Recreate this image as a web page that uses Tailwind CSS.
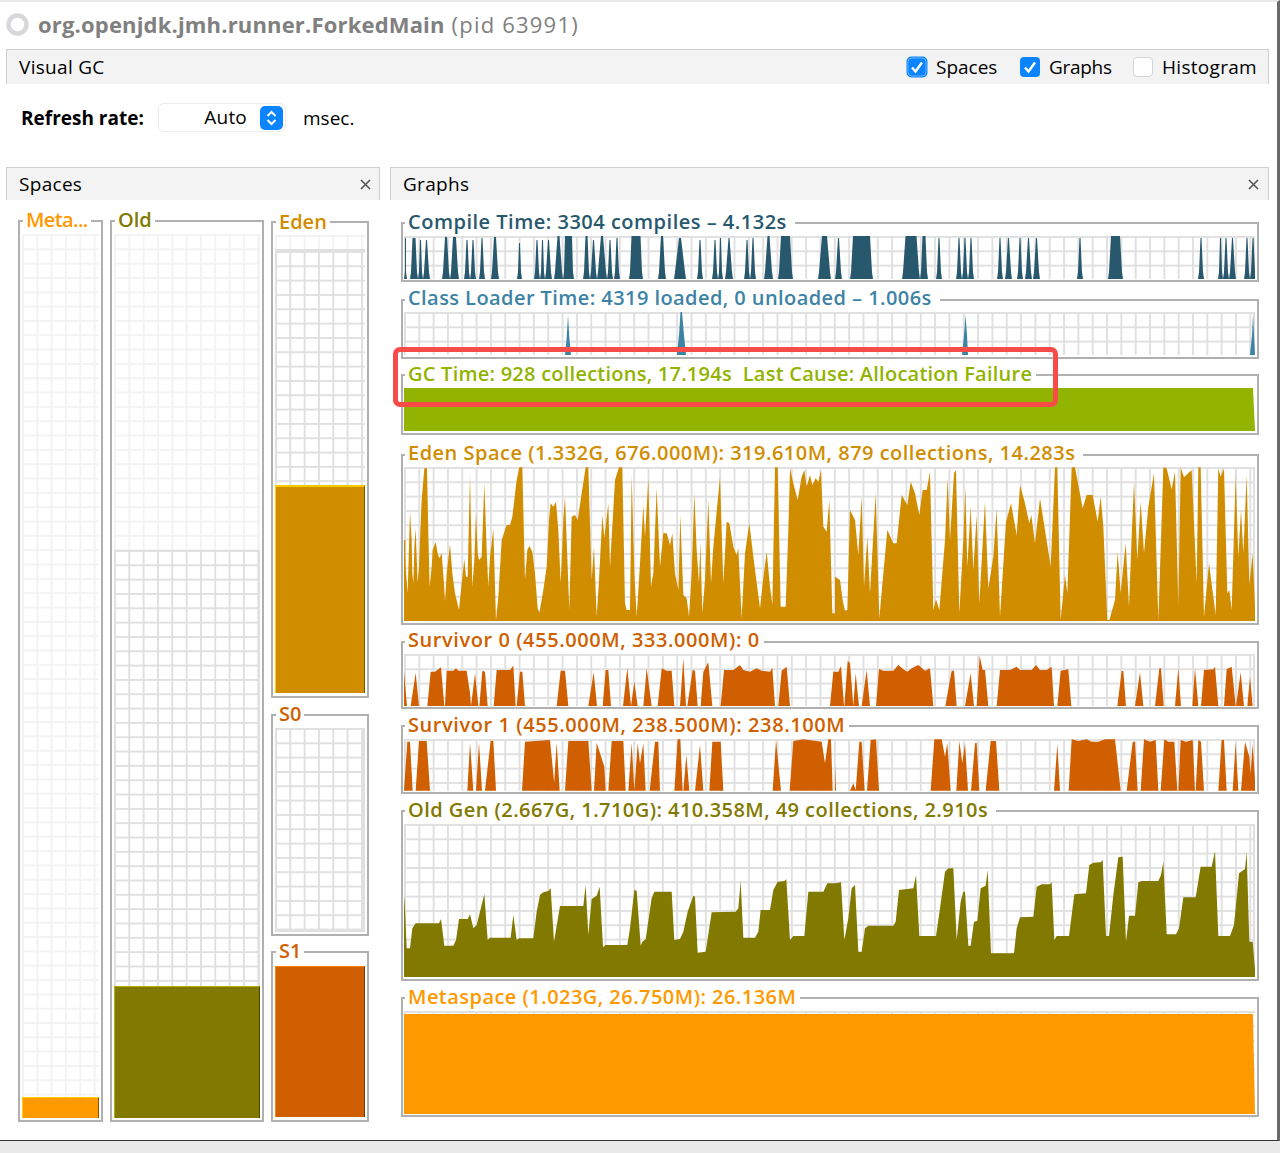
<!DOCTYPE html>
<html lang="en">
<head>
  <meta charset="UTF-8" />
  <title>Visual GC</title>
  <script src="https://cdn.jsdelivr.net/npm/@tailwindcss/browser@4"></script>
</head>
<body class="bg-[#e9e9e9]">
<div class="relative w-[1280px] h-[1153px] overflow-hidden font-['Open_Sans',sans-serif] text-black">
  <div class="h-[1141px] bg-white border-t-2 border-t-[#e8e8e8] border-b border-b-[#333] border-r-[3px] border-r-[#6a6a6a]">

    <!-- Title -->
    <div class="flex items-center h-[47px] pl-[6px] pb-[2px]">
      <svg width="24" height="24" viewBox="0 0 24 24"><circle cx="11.5" cy="11.5" r="9" fill="none" stroke="#d8d8dc" stroke-width="4.5"/></svg>
      <span class="ml-[8px] text-[22px] font-bold text-[#808080] tracking-[0.17px]">org.openjdk.jmh.runner.ForkedMain</span>
      <span class="ml-[7px] text-[22px] text-[#808080] tracking-[1.2px]">(pid 63991)</span>
    </div>

    <!-- Visual GC bar -->
    <div class="flex items-center justify-between ml-[6px] w-[1263px] h-[35px] bg-[#f3f3f3] border-t border-x border-[#cfcfcf] pl-[12px] pr-[11px] text-[19px]">
      <span class="tracking-[0.3px]">Visual GC</span>
      <div class="flex items-center">
        <svg width="22" height="22" viewBox="0 0 22 22" class="mr-[8px]"><rect x="0.5" y="0.5" width="21" height="21" rx="5" fill="#0a84ff"/><rect x="2" y="2" width="18" height="18" rx="4" fill="#0a84ff" stroke="#66b3ff"/><path d="M6 11.5l3.5 4L16 6.5" fill="none" stroke="#fff" stroke-width="2.4"/></svg>
        <span class="w-[84px]">Spaces</span>
        <svg width="20" height="20" viewBox="0 0 20 20" class="mr-[9px]"><rect width="20" height="20" rx="4" fill="#0a84ff"/><path d="M5 10.5l3.5 4L15 5.5" fill="none" stroke="#fff" stroke-width="2.4"/></svg>
        <span class="w-[84px] tracking-[-0.3px]">Graphs</span>
        <span class="w-[20px] h-[20px] mr-[9px] rounded-[4px] bg-white border border-[#d4d4d4]"></span>
        <span class="tracking-[0.3px]">Histogram</span>
      </div>
    </div>

    <!-- Refresh rate -->
    <div class="flex items-center h-[83px] pl-[21px] pb-[16px] text-[19px]">
      <span class="font-bold w-[137px] pt-[2px]">Refresh rate:</span>
      <div class="flex items-center justify-end w-[128px] h-[29px] rounded-[6px] bg-white border border-[#ececec] pr-[2px]">
        <span class="mr-[13px] tracking-[0.2px]">Auto</span>
        <svg width="23" height="24" viewBox="0 0 23 24"><rect width="23" height="24" rx="5" fill="#0a84ff"/><path d="M7.5 10l4-4 4 4M7.5 14l4 4 4-4" fill="none" stroke="#fff" stroke-width="2"/></svg>
      </div>
      <span class="ml-[17px] pt-[2px]">msec.</span>
    </div>

    <div class="flex ml-[6px] gap-[10px]">
      <!-- Spaces panel -->
      <section class="w-[374px]">
        <div class="flex items-center justify-between h-[33px] bg-[#f3f3f3] border-t border-x border-[#cfcfcf] pl-[12px] pr-[8px] text-[19px]">
          <span class="tracking-[0.3px]">Spaces</span>
          <svg width="11" height="11" viewBox="0 0 11 11"><path d="M1 1l9 9M10 1l-9 9" stroke="#555" stroke-width="1.6"/></svg>
        </div>
        <div class="flex items-start pl-[12px] pt-[20px] gap-[7px]">
          <!-- Meta -->
          <div class="relative w-[85px] h-[902px] border-2 border-[#b0b0b0] pt-[12px] pl-[2px] pr-[2px]">
            <span class="absolute left-[3px] top-[-14px] bg-white px-[3px] text-[20px] leading-[24px] font-semibold tracking-[-0.6px] text-[#ff9900]">Meta...</span>
            <div class="h-[884px] flex flex-col justify-end bg-[linear-gradient(#f3f3f3_2px,transparent_2px),linear-gradient(90deg,#f3f3f3_2px,transparent_2px)] bg-[size:14.33px_14.33px]">
              <div class="h-[21px] bg-[#ff9900] border-t border-t-[#ffcc00] border-l border-l-[#ffcc00] border-r border-r-[#8a5200]"></div>
            </div>
          </div>
          <!-- Old -->
          <div class="relative w-[154px] h-[902px] border-2 border-[#b0b0b0] pt-[12px] pl-[2px] pr-[2px]">
            <span class="absolute left-[3px] top-[-14px] bg-white px-[3px] text-[20px] leading-[24px] font-semibold text-[#827900]">Old</span>
            <div class="h-[316px] border-r-2 border-r-[#f3f3f3] bg-[linear-gradient(#f3f3f3_2px,transparent_2px),linear-gradient(90deg,#f3f3f3_2px,transparent_2px)] bg-[size:14.33px_14.33px]"></div>
            <div class="h-[436px] border-r-2 border-r-[#e0e0e0] bg-[linear-gradient(#e0e0e0_2px,transparent_2px),linear-gradient(90deg,#e0e0e0_2px,transparent_2px)] bg-[size:14.33px_14.33px]"></div>
            <div class="h-[132px] bg-[#827900] border-t border-t-[#b5ad00] border-l border-l-[#b5ad00] border-r border-r-[#4a4500]"></div>
          </div>
          <!-- Eden / S0 / S1 -->
          <div class="flex flex-col w-[98px] pt-px">
            <div class="relative h-[477px] border-2 border-[#b0b0b0] pt-[12px] pl-[2px] pr-[2px]">
              <span class="absolute left-[3px] top-[-13px] bg-white px-[3px] text-[20px] leading-[24px] font-semibold text-[#d18d00]">Eden</span>
              <div class="h-[14px] bg-[linear-gradient(#f3f3f3_2px,transparent_2px),linear-gradient(90deg,#f3f3f3_2px,transparent_2px)] bg-[size:14.33px_14.33px]"></div>
              <div class="h-[236px] border-t-2 border-t-[#e0e0e0] bg-[linear-gradient(#e0e0e0_2px,transparent_2px),linear-gradient(90deg,#e0e0e0_2px,transparent_2px)] bg-[size:14.33px_14.33px]"></div>
              <div class="h-[208px] bg-[#d18d00] border-t-2 border-t-[#ffcc00] border-l border-l-[#ffcc00] border-r border-r-[#7a5200]"></div>
            </div>
            <div class="relative mt-[16px] h-[222px] border-2 border-[#b0b0b0] pt-[12px] pl-[2px] pr-[2px]">
              <span class="absolute left-[3px] top-[-14px] bg-white px-[3px] text-[20px] leading-[24px] font-semibold text-[#cf5f00]">S0</span>
              <div class="h-[204px] border-b-2 border-b-[#e0e0e0] border-r-2 border-r-[#e0e0e0] bg-[linear-gradient(#e0e0e0_2px,transparent_2px),linear-gradient(90deg,#e0e0e0_2px,transparent_2px)] bg-[size:14.33px_14.33px]"></div>
            </div>
            <div class="relative mt-[15px] h-[171px] border-2 border-[#b0b0b0] pt-[13px] pl-[2px] pr-[2px]">
              <span class="absolute left-[3px] top-[-14px] bg-white px-[3px] text-[20px] leading-[24px] font-semibold text-[#cf5f00]">S1</span>
              <div class="h-[151px] bg-[#cf5f00] border-t border-t-[#ff8000] border-l border-l-[#ff8000] border-r border-r-[#7a3800]"></div>
            </div>
          </div>
        </div>
      </section>

      <!-- Graphs panel -->
      <section class="w-[879px]">
        <div class="flex items-center justify-between h-[33px] bg-[#f3f3f3] border-t border-x border-[#cfcfcf] pl-[12px] pr-[9px] text-[19px]">
          <span class="tracking-[0.3px]">Graphs</span>
          <svg width="11" height="11" viewBox="0 0 11 11"><path d="M1 1l9 9M10 1l-9 9" stroke="#555" stroke-width="1.6"/></svg>
        </div>
        <div class="ml-[11px] w-[858px] pt-[22px]">
          <!-- Compile -->
          <div class="relative h-[60px] border-2 border-[#b0b0b0] pt-[12px] pl-px pr-[2px]">
            <span class="absolute left-[2px] top-[-14px] bg-white px-[3px] pr-[8px] text-[20px] leading-[24px] font-semibold tracking-[0.5px] text-[#27586e]">Compile Time: 3304 compiles – 4.132s</span>
            <div class="h-[43px] border-r-2 border-r-[#e0e0e0] bg-[linear-gradient(#e0e0e0_2px,transparent_2px),linear-gradient(90deg,#e0e0e0_2px,transparent_2px)] bg-[size:14.33px_14.33px]">
              <svg class="block" width="851" height="43" viewBox="404 236 851 43"><path id="compile" fill="#27586e"/></svg>
            </div>
          </div>
          <!-- Class loader -->
          <div class="relative mt-[17px] h-[60px] border-2 border-[#b0b0b0] pt-[11px] pl-px pr-[2px]">
            <span class="absolute left-[2px] top-[-15px] bg-white px-[3px] pr-[8px] text-[20px] leading-[24px] font-semibold tracking-[0.43px] text-[#3d83a5]">Class Loader Time: 4319 loaded, 0 unloaded – 1.006s</span>
            <div class="h-[43px] border-r-2 border-r-[#e0e0e0] bg-[linear-gradient(#e0e0e0_2px,transparent_2px),linear-gradient(90deg,#e0e0e0_2px,transparent_2px)] bg-[size:14.33px_14.33px]">
              <svg class="block" width="851" height="43" viewBox="404 312 851 43"><path fill="#3d83a5" d="M565 355L566.5 340L568 315L569.5 340L571 355ZM677 355L679 335L680.5 312H682L684 335L686 355ZM962 355L964 335L965.5 315L967 335L968 355ZM1250 355L1252 335L1253 315L1254 335L1255 355Z"/></svg>
            </div>
          </div>
          <!-- GC time -->
          <div class="relative mt-[15px] h-[61px] border-2 border-[#b0b0b0] pt-[12px] pl-px pr-[2px]">
            <span class="absolute left-[2px] top-[-14px] bg-white px-[3px] pr-[4px] text-[20px] leading-[24px] font-semibold tracking-[0.24px] text-[#92b300]">GC Time: 928 collections, 17.194s&nbsp; Last Cause: Allocation Failure</span>
            <svg class="block" width="851" height="43" viewBox="404 388 851 43"><path fill="#92b300" d="M404 388H1253L1255 431H404Z"/></svg>
          </div>
          <!-- Eden -->
          <div class="relative mt-[19px] h-[171px] border-2 border-[#b0b0b0] pt-[11px] pl-px pr-[2px]">
            <span class="absolute left-[2px] top-[-15px] bg-white px-[3px] pr-[8px] text-[20px] leading-[24px] font-semibold tracking-[0.49px] text-[#d18d00]">Eden Space (1.332G, 676.000M): 319.610M, 879 collections, 14.283s</span>
            <div class="h-[154px] border-r-2 border-r-[#e0e0e0] bg-[linear-gradient(#e0e0e0_2px,transparent_2px),linear-gradient(90deg,#e0e0e0_2px,transparent_2px)] bg-[size:14.33px_14.33px]">
              <svg class="block" width="851" height="154" viewBox="27 81 2553 462">
                <polygon fill="#d18d00" points="27,543 27,300 31,300 31,345 33,395 38,460 42,320 45,215 50,300 52,400 55,430 58,320 62,265 65,350 68,430 72,380 75,300 80,180 88,85 96,85 100,280 104,440 110,380 113,330 122,307 128,340 133,355 140,340 147,430 150,485 155,400 165,313 172,400 180,460 192,510 200,430 208,357 213,410 218,410 225,105 232,440 238,360 243,215 248,340 252,360 260,350 268,130 275,330 280,440 285,350 295,268 303,540 310,470 320,300 335,255 345,255 352,230 365,120 373,82 382,82 390,420 397,330 403,318 412,335 420,400 428,505 433,518 445,450 455,380 462,240 467,190 475,200 483,185 490,270 497,430 505,240 510,170 515,300 523,510 530,230 540,225 548,240 560,160 572,82 580,82 590,420 597,320 605,530 612,420 622,225 628,295 640,190 645,380 660,120 672,82 682,82 690,490 695,510 705,510 710,105 718,400 725,530 735,370 745,195 750,290 760,115 768,440 775,400 785,145 795,380 805,280 815,280 825,315 832,280 840,400 850,450 856,225 865,465 875,475 882,530 890,400 898,160 905,330 912,430 916,305 922,520 930,420 940,180 948,430 955,320 975,110 985,430 995,245 1003,250 1015,320 1025,345 1030,325 1040,535 1050,340 1063,250 1075,350 1095,505 1103,430 1115,335 1125,440 1132,495 1140,82 1148,82 1157,500 1172,500 1180,270 1185,85 1195,130 1208,180 1220,110 1228,90 1235,140 1245,105 1252,135 1262,115 1270,125 1278,90 1285,260 1295,275 1303,180 1312,520 1320,520 1320,543"/>
                <polygon fill="#d18d00" transform="translate(1305 0)" points="15,543 15,410 30,420 38,480 45,512 52,510 60,210 75,240 85,345 95,170 102,440 112,290 120,460 137,160 148,535 160,400 172,270 190,310 200,310 215,165 232,195 242,125 255,160 268,225 278,150 290,150 300,95 310,510 318,478 328,510 345,300 353,115 360,300 372,100 378,90 388,520 400,300 406,140 412,380 422,200 430,390 440,225 448,490 465,185 475,445 490,350 500,205 510,530 528,245 543,190 552,240 560,285 570,135 585,190 598,250 604,225 615,310 630,175 645,270 662,380 675,82 682,82 692,540 705,405 712,460 725,82 735,82 758,205 770,165 788,165 803,245 812,170 820,260 832,540 838,540 855,480 863,335 872,460 887,310 897,500 905,290 912,125 922,360 932,185 942,340 955,200 972,100 985,540 1000,82 1010,85 1025,148 1035,95 1045,495 1052,82 1062,112 1085,90 1100,430 1105,82 1112,82 1122,530 1137,370 1150,470 1157,525 1165,85 1172,110 1182,85 1192,460 1198,450 1205,510 1217,105 1225,350 1233,210 1240,340 1250,105 1258,435 1268,340 1277,543"/>
              </svg>
            </div>
          </div>
          <!-- Survivor 0 -->
          <div class="relative mt-[16px] h-[68px] border-2 border-[#b0b0b0] pt-[11px] pl-px pr-[2px]">
            <span class="absolute left-[2px] top-[-15px] bg-white px-[3px] pr-[4px] text-[20px] leading-[24px] font-semibold tracking-[0.57px] text-[#cf5f00]">Survivor 0 (455.000M, 333.000M): 0</span>
            <div class="h-[52px] border-r-2 border-r-[#e0e0e0] bg-[linear-gradient(#e0e0e0_2px,transparent_2px),linear-gradient(90deg,#e0e0e0_2px,transparent_2px)] bg-[size:14.33px_14.33px]">
              <svg class="block" width="851" height="52" viewBox="27 72 2553 156">
                <path fill="#cf5f00" d="M27 228V125L36 228ZM47 228L62 128L72 228ZM97 228L107 125H120L138 112L148 228ZM150 228L155 122H175L183 115L190 122H215L225 190L228 228ZM228 228L240 130L250 228ZM253 228L262 122L270 125L278 228ZM296 228L305 120H345L355 107L362 228ZM365 228L375 125L382 125L390 228ZM485 228L497 122H510L520 228ZM580 228L596 127L606 228ZM623 228L632 120H640L648 228ZM684 228L697 113L708 228L718 155L728 228ZM745 228L755 115L770 228ZM788 228L800 115L815 122H830L838 228ZM855 228L865 85L873 228ZM877 228L893 120L900 122L908 228ZM917 228L925 125L940 97L952 228ZM977 228L987 120H1015L1035 105L1045 120L1065 125L1085 115L1100 122L1125 125L1132 113L1140 228ZM1150 228L1160 122L1175 110L1185 228ZM1305 228L1315 125H1320V228Z"/>
                <path fill="#cf5f00" transform="translate(1305 0)" d="M15 228V125H25L33 108L42 228ZM43 228L53 92L60 100L70 228ZM70 228L77 130L87 228ZM95 228L110 120L120 228ZM138 228L147 117L160 122H190L205 105L220 118L232 125L245 115L265 105L285 122L300 115L310 228ZM346 228L365 122H372L380 228ZM405 228L422 130L432 228ZM440 228L449 77L458 120H465L475 228ZM500 228L510 120H540L560 110L570 120H605L618 105L630 120H650L665 110L672 228ZM682 228L692 122L715 118L724 228ZM862 228L875 123H880L888 228ZM915 228L930 127L940 228ZM975 228L988 115H993L1001 228ZM1035 228L1045 115L1053 228ZM1087 228L1095 115L1105 228ZM1113 228L1122 120L1150 118L1155 110L1165 228ZM1182 228L1190 118L1205 110L1217 228ZM1218 228L1232 127L1242 228ZM1252 228L1260 140L1268 228Z"/>
              </svg>
            </div>
          </div>
          <!-- Survivor 1 -->
          <div class="relative mt-[16px] h-[69px] border-2 border-[#b0b0b0] pt-[12px] pl-px pr-[2px]">
            <span class="absolute left-[2px] top-[-14px] bg-white px-[3px] pr-[4px] text-[20px] leading-[24px] font-semibold tracking-[0.58px] text-[#cf5f00]">Survivor 1 (455.000M, 238.500M): 238.100M</span>
            <div class="h-[52px] border-r-2 border-r-[#e0e0e0] bg-[linear-gradient(#e0e0e0_2px,transparent_2px),linear-gradient(90deg,#e0e0e0_2px,transparent_2px)] bg-[size:14.33px_14.33px]">
              <svg class="block" width="851" height="52" viewBox="27 327 2553 156">
                <path fill="#cf5f00" d="M27 482L37 335H45L53 482ZM62 482L72 333H95L105 482ZM217 482L225 338L235 482ZM243 482L252 338L261 482ZM270 482L287 332H295L303 482ZM381 482L390 335L465 330L480 482ZM476 482L485 338L494 482ZM510 482L520 333H580L590 482ZM597 482L605 338L628 410L632 482ZM640 482L650 333H685L692 482ZM700 482L710 338L718 482L728 340L735 400L745 340L752 482ZM764 482L780 335H790L795 482ZM838 482L848 328H856L863 482ZM865 482L874 375L883 482ZM900 482L915 345L925 482ZM943 482L952 335H977L985 482ZM1133 482L1143 330L1158 482ZM1184 482L1195 333L1225 328L1280 335L1290 400L1300 328H1308L1313 482Z"/>
                <path fill="#cf5f00" transform="translate(1305 0)" d="M15 482V400L18 482ZM60 482L70 460L78 482ZM77 482L88 335L95 335L104 482ZM111 482L122 330L138 328L147 482ZM302 482L313 328H335L345 380L352 340L362 482ZM379 482L388 333L397 400L405 338L414 482ZM423 482L435 340L440 338L448 482ZM467 482L482 333H498L508 482ZM672 482L682 342L690 482ZM716 482L725 328L745 333L770 328L785 335H805L825 328H855L872 482ZM890 482L908 335H915L923 482ZM932 482L942 328L960 335L977 330L985 482ZM992 482L1003 328L1015 335H1033L1042 482ZM1045 482L1052 330L1068 335L1088 330L1095 482ZM1097 482L1105 330L1113 335L1122 482ZM1165 482L1175 330H1182L1190 482ZM1208 482L1217 338L1225 482ZM1233 482L1245 335L1258 380L1265 482ZM1258 482L1268 342L1277 482Z"/>
              </svg>
            </div>
          </div>
          <!-- Old gen -->
          <div class="relative mt-[16px] h-[171px] border-2 border-[#b0b0b0] pt-[12px] pl-px pr-[2px]">
            <span class="absolute left-[2px] top-[-14px] bg-white px-[3px] pr-[8px] text-[20px] leading-[24px] font-semibold tracking-[0.45px] text-[#827900]">Old Gen (2.667G, 1.710G): 410.358M, 49 collections, 2.910s</span>
            <div class="h-[153px] border-r-2 border-r-[#e0e0e0] bg-[linear-gradient(#e0e0e0_2px,transparent_2px),linear-gradient(90deg,#e0e0e0_2px,transparent_2px)] bg-[size:14.33px_14.33px]">
              <svg class="block" width="851" height="153" viewBox="27 87 2553 459">
                <polygon fill="#827900" points="27,546 27,300 30,340 35,460 45,460 52,400 62,385 132,385 138,372 148,452 175,452 183,435 192,372 218,372 225,358 235,400 245,390 268,297 278,435 285,428 347,428 355,360 365,435 372,430 415,430 425,350 435,300 445,292 460,288 467,280 477,440 495,333 565,333 572,270 580,420 590,312 605,302 614,275 624,457 632,450 697,450 705,400 718,285 725,287 737,452 742,440 752,433 770,310 778,290 830,290 838,435 855,432 865,410 878,350 895,302 900,305 908,473 932,470 950,352 1022,350 1030,340 1037,258 1045,428 1080,428 1090,410 1097,345 1125,345 1135,285 1148,260 1168,258 1174,253 1185,435 1195,423 1228,423 1240,290 1285,290 1297,265 1320,265 1320,546"/>
                <polygon fill="#827900" transform="translate(1305 0)" points="15,546 15,265 33,262 43,435 55,370 65,280 75,270 85,470 95,470 105,400 115,392 190,392 197,380 207,285 250,280 258,240 268,423 318,423 330,340 345,230 355,220 370,220 380,435 392,320 400,290 405,290 415,452 422,452 432,380 442,378 452,280 467,272 473,225 483,475 552,475 560,400 570,367 610,365 620,275 635,268 660,268 665,262 673,435 680,423 717,423 733,298 768,295 778,210 790,203 812,202 818,195 828,423 837,423 850,300 865,187 878,185 888,440 897,362 915,362 925,262 935,258 985,258 993,240 1000,200 1010,418 1038,418 1047,400 1060,307 1097,307 1112,215 1145,215 1155,168 1165,423 1200,423 1212,390 1227,235 1245,222 1250,170 1258,440 1268,440 1277,546"/>
              </svg>
            </div>
          </div>
          <!-- Metaspace -->
          <div class="relative mt-[16px] h-[120px] border-2 border-[#b0b0b0] pt-[12px] pl-px pr-[2px]">
            <span class="absolute left-[2px] top-[-14px] bg-white px-[3px] pr-[4px] text-[20px] leading-[24px] font-semibold tracking-[0.46px] text-[#ff9900]">Metaspace (1.023G, 26.750M): 26.136M</span>
            <div class="h-[103px] bg-[linear-gradient(#e0e0e0_2px,transparent_2px),linear-gradient(90deg,#e0e0e0_2px,transparent_2px)] bg-[size:14.33px_14.33px]">
              <svg class="block" width="851" height="103" viewBox="404 1011 851 103"><path fill="#ff9900" d="M404 1014H1253L1255 1114H404Z"/></svg>
            </div>
          </div>
        </div>
      </section>
    </div>
  </div>

  <!-- Red highlight over the GC time row -->
  <div class="absolute left-[393px] top-[347px] w-[665px] h-[60px] rounded-[7px] border-[5px] border-[#f94c48]"></div>
</div>

<script>
  // start, end, flat top width, top y of the compile spikes
  const spikes = [[404,407,0,238],[410,418,2,238],[418,423,0,240],[423,430,0,240],[442,450,1,237],[450,459,2,237],[464,470,0,240],[470,476,0,240],[479,485,0,238],[491,499,1,237],[517,522,0,243],[534,540,0,240],[540,545,0,240],[545,552,0,240],[554,563,1,236],[563,574,6,236],[583,590,1,236],[590,597,0,240],[597,607,1,236],[607,613,0,240],[614,620,0,238],[629,643,8,236],[658,666,1,236],[674,686,1,238],[697,703,0,240],[712,718,0,240],[718,723,0,238],[725,733,0,238],[744,750,0,240],[750,756,0,238],[764,773,1,236],[778,793,8,236],[818,831,4,236],[835,842,0,238],[850,873,16,236],[902,920,10,236],[920,928,2,236],[936,942,0,238],[956,962,0,238],[962,968,0,238],[968,974,0,238],[997,1003,0,238],[1005,1012,0,238],[1017,1023,0,238],[1025,1032,0,238],[1033,1040,0,238],[1077,1083,0,238],[1108,1123,8,236],[1198,1204,0,238],[1218,1223,0,238],[1223,1229,0,238],[1229,1236,0,238],[1244,1250,0,238],[1250,1256,0,238]];
  document.getElementById("compile").setAttribute("d", spikes.map(([a, b, f, t]) => {
    const c = (a + b) / 2;
    return `M${a} 279L${a + 1} 272L${c - f / 2 - .5} ${t}H${c + f / 2 + .5}L${b - 1} 272L${b} 279Z`;
  }).join(""));
</script>
</body>
</html>
